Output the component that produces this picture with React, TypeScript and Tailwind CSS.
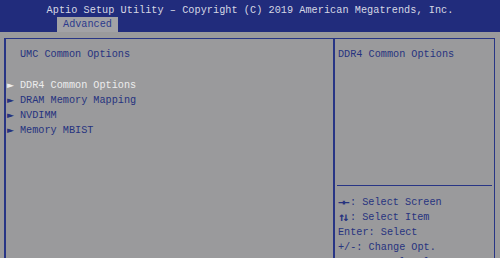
export default function App() {
  const items = ["DDR4 Common Options", "DRAM Memory Mapping", "NVDIMM", "Memory MBIST"];
  const help = [
    { k: "→←", t: ": Select Screen" },
    { k: "↑↓", t: ": Select Item" },
    { k: "", t: "Enter: Select" },
    { k: "", t: "+/-: Change Opt." },
    { k: "", t: "F1: General Help" },
  ];

  return (
    <div className="w-[500px] h-[258px] overflow-hidden bg-[#9a9a9c] font-['Liberation_Mono','DejaVu_Sans_Mono',monospace] text-[10.2px] leading-[15px]">
      <div className="h-[32px] bg-[#212c7c] relative">
        <div className="pt-[3px] text-center text-[#d6d8e4] tracking-[0.05px]">
          Aptio Setup Utility – Copyright (C) 2019 American Megatrends, Inc.
        </div>
        <div className="absolute left-[57px] bottom-0 w-[61px] h-[15px] bg-[#a2a2a6] text-[#2c3a8c] text-center leading-[15px]">
          Advanced
        </div>
      </div>
      <div className="pl-[4px] pr-[5px] pt-[6px] bg-[#9a9a9c]">
        <div className="flex h-[240px] border-l-2 border-t border-r border-[#283585]">
          <div className="w-[327px] pl-[1px] pt-[8px] text-[#27337f]">
            <div className="pl-[13px]">UMC Common Options</div>
            <div className="h-[16px]" />
            {items.map((t, i) => (
              <div key={t} className={"flex " + (i === 0 ? "text-[#ececec]" : "text-[#26337f]")}>
                <span className="w-[13px] text-[9px] font-['DejaVu_Sans',sans-serif]">►</span>
                <span>{t}</span>
              </div>
            ))}
          </div>
          <div className="flex-1 flex flex-col border-l-2 border-[#283585] text-[#27337f]">
            <div className="h-[146px] pl-[3px] pt-[8px]">DDR4 Common Options</div>
            <div className="border-t border-[#283585] mx-[2px] pl-[1px] pt-[9px]">
              {help.map((h) => (
                <div key={h.t} className="flex h-[15px]">
                  {h.k && (
                    <span className="w-[12px] text-[12px] leading-[15px] font-bold tracking-[-3px] font-['DejaVu_Sans_Mono',monospace]">
                      {h.k}
                    </span>
                  )}
                  <span>{h.t}</span>
                </div>
              ))}
            </div>
          </div>
        </div>
      </div>
    </div>
  );
}
